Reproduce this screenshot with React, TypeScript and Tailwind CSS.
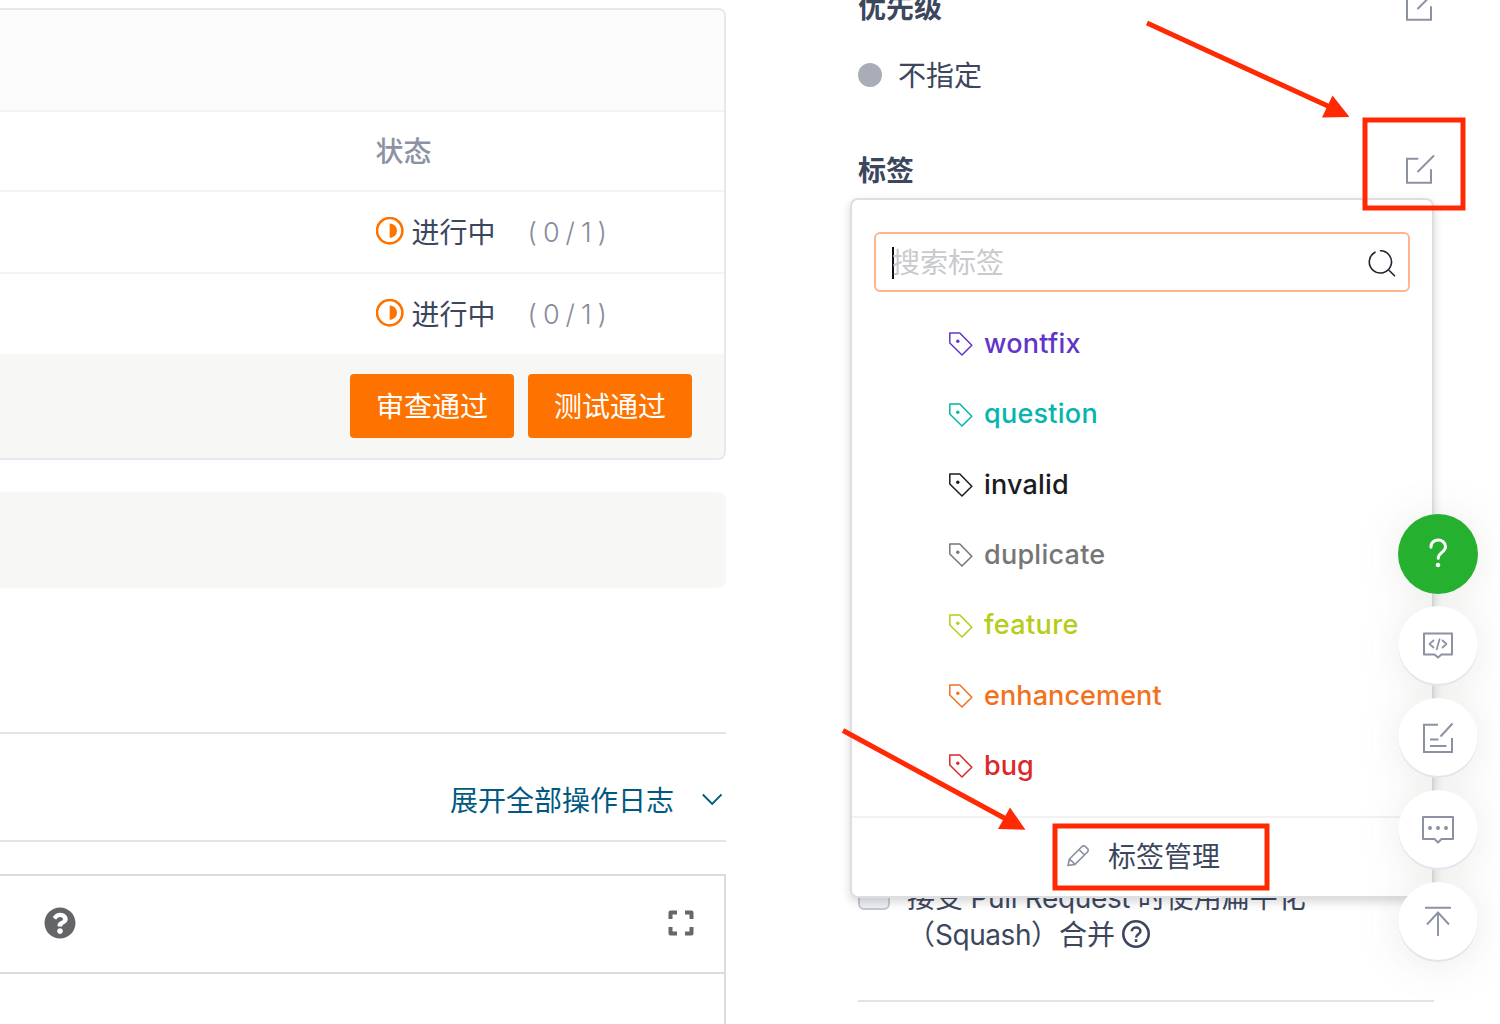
import type { ReactNode } from 'react'

const labels = [
  { name: 'wontfix', color: 'text-[#6434c9]', track: 'tracking-[0.250px]' },
  { name: 'question', color: 'text-[#06b5ad]', track: 'tracking-[0.250px]' },
  { name: 'invalid', color: 'text-[#1b1c1d]', track: 'tracking-[0.200px]' },
  { name: 'duplicate', color: 'text-[#767676]', track: 'tracking-[0.250px]' },
  { name: 'feature', color: 'text-[#b5cc18]', track: 'tracking-[0.350px]' },
  { name: 'enhancement', color: 'text-[#f2711c]', track: 'tracking-[0.100px]' },
  { name: 'bug', color: 'text-[#db2828]', track: 'tracking-[0px]' },
]

function EditIcon() {
  return (
    <svg className="-mr-0.5 h-8 w-8 text-[#8c92a4]" viewBox="0 0 32 32" fill="none" stroke="currentColor" strokeWidth="2">
      <path d="M13.500 4.700H3v24h24V16" strokeLinecap="round" />
      <path d="M14 17.500 29.500 2" strokeLinecap="round" />
    </svg>
  )
}

function ProgressIcon() {
  return (
    <svg className="-mt-0.5 h-7 w-7 shrink-0" viewBox="0 0 28 28">
      <circle cx="13.700" cy="13.700" r="12.700" fill="none" stroke="#fe7300" strokeWidth="2.600" />
      <path d="M13.700 6.400a7.300 7.300 0 0 1 0 14.600z" fill="#fe7300" />
    </svg>
  )
}

function TagIcon() {
  return (
    <svg className="h-6 w-6 shrink-0" viewBox="0 0 24 24" fill="none" stroke="currentColor" strokeWidth="1.500" strokeLinejoin="round">
      <path d="M.8.900h10L22.800 13.300 13 23 .8 11z" />
      <circle cx="8.800" cy="9.200" r="1.700" fill="currentColor" stroke="none" />
    </svg>
  )
}

function StatusRow({ last = false }: { last?: boolean }) {
  return (
    <div className={last ? 'flex h-20 items-center pl-[376px]' : 'flex h-[82px] items-center border-b-2 border-[#f0f4f7] pl-[376px]'}>
      <ProgressIcon />
      <span className="ml-[7.500px] pt-0.5 text-[28px]">进行中</span>
      <span className="ml-8 pt-0.5 text-[27px] font-light tracking-[6px] text-[#858b9e]">(0/1)</span>
    </div>
  )
}

function Activity() {
  return (
    <main className="w-[726px] shrink-0 pt-2">
      <section className="h-[452px] overflow-hidden rounded-r-lg border-2 border-l-0 border-[#e3e9ed]">
        <div className="h-[102px] border-b-2 border-[#f0f4f7] bg-[#fcfcfc]" />
        <div className="flex h-20 items-center border-b-2 border-[#f0f4f7] pt-0.5 pl-[375.500px] text-[28px] font-medium text-[#8c92a4]">状态</div>
        <StatusRow />
        <StatusRow last />
        <div className="flex h-[104px] items-center justify-end gap-3.5 bg-[#f7f7f6] pr-8 text-[28px] text-white">
          <button className="h-16 w-41 rounded bg-[#fe7300] pt-0.5">审查通过</button>
          <button className="h-16 w-41 rounded bg-[#fe7300] pt-0.5">测试通过</button>
        </div>
      </section>
      <div className="mt-8 h-24 rounded-r-lg bg-[#f7f7f6]" />
      <div className="mt-36 flex h-[110px] items-center justify-end border-y-2 border-[#e0e5ea] pt-[26px] text-[28px] text-[#005980]">
        <span className="pt-0.5">展开全部操作日志</span>
        <svg className="mr-1 ml-7 h-5 w-5" viewBox="0 0 20 20" fill="none" stroke="currentColor" strokeWidth="1.800">
          <path d="m.8 4.500 9.400 9.500 9.300-9.500" />
        </svg>
      </div>
      <section className="mt-8 h-[150px] border-t-2 border-r-2 border-[#dcdcdc]">
        <div className="flex h-[98px] items-center justify-between border-b-2 border-[#dcdcdc] pr-[30px] pb-0.5 pl-11">
          <svg className="h-8 w-8" viewBox="0 0 512 512" fill="#646569">
            <path d="M504 256c0 137-111 248-248 248S8 393 8 256C8 119.100 119 8 256 8s248 111.100 248 248zM262.700 90c-54.500 0-89.300 23-116.500 63.800-3.500 5.300-2.400 12.400 2.700 16.300l34.700 26.300c5.200 3.900 12.600 3 16.700-2.100 17.900-22.700 30.100-35.800 57.300-35.800 20.400 0 45.700 13.100 45.700 33 0 15-12.400 22.700-32.500 34C247.100 238.500 216 254.900 216 296v4c0 6.600 5.400 12 12 12h56c6.600 0 12-5.400 12-12v-1.300c0-28.500 83.200-29.600 83.200-106.700 0-58-60.200-102-116.500-102zM256 338c-25.400 0-46 20.600-46 46s20.600 46 46 46 46-20.600 46-46-20.600-46-46-46z" />
          </svg>
          <svg className="h-[26px] w-[26px]" viewBox="0 0 26 26" fill="none" stroke="#66676b" strokeWidth="4" strokeLinejoin="round">
            <path d="M9 2.500H2.500V9M17 2.500h6.500V9M9 23.500H2.500V17M17 23.500h6.500V17" />
          </svg>
        </div>
      </section>
    </main>
  )
}

function LabelMenu() {
  return (
    <div className="absolute top-[198px] left-[850px] h-[700px] w-[584px] rounded-lg border-2 border-[#dddedf] bg-white shadow-[0_4px_10px_rgba(34,36,38,0.18)]">
      <div className="mx-[22px] mt-8 flex h-15 items-center justify-between rounded-md border-2 border-[#ffb58c] pt-0.5 pr-3 pl-4">
        <div className="flex items-center text-[28px] text-[#c9cacd]">
          <span className="h-8 w-0.5 bg-[#111]" />
          <span className="-ml-0.5">搜索标签</span>
        </div>
        <svg className="h-7 w-7" viewBox="0 0 28 28" fill="none" stroke="#20232c" strokeWidth="1.600" strokeLinecap="round">
          <path d="M12.500 1.800A11.100 11.100 0 1 1 7 3.200M21.500 21.800l5 5" />
        </svg>
      </div>
      <ul className="mt-[17px] h-[507px]">
        {labels.map((l) => (
          <li key={l.name} className={`flex h-[70.350px] items-center pl-[97px] ${l.color}`}>
            <TagIcon />
            <span className={`ml-[11px] text-[27px] font-medium ${l.track}`}>{l.name}</span>
          </li>
        ))}
      </ul>
      <div className="flex h-20 items-center border-t-2 border-[#f2f2f3] pl-[214px] text-[28px]">
        <svg className="-mt-0.5 h-6 w-6 text-[#8c92a4]" viewBox="0 0 24 24" fill="none" stroke="currentColor" strokeWidth="1.700" strokeLinejoin="round">
          <path d="M2 21.500 3.500 15 16 2.500a2.300 2.300 0 0 1 3.300 0l2.200 2.200a2.300 2.300 0 0 1 0 3.300L9 20.300zM3.500 15 9 20.300M13 5.500l5.500 5.500" />
        </svg>
        <span className="ml-[18px]">标签管理</span>
      </div>
    </div>
  )
}

function Sidebar() {
  return (
    <aside className="ml-[132px] w-[576px] shrink-0 text-[28px]">
      <div className="-mt-3 flex h-10 items-center justify-between font-semibold">
        <span>优先级</span>
        <span className="-mt-0.5 flex"><EditIcon /></span>
      </div>
      <div className="mt-7 flex h-10 items-center">
        <span className="-mt-0.5 h-6 w-6 rounded-full bg-[#a9adb7]" />
        <span className="ml-4">不指定</span>
      </div>
      <div className="mt-[54px] flex h-10 items-center justify-between font-semibold">
        <span className="pt-0.5">标签</span>
        <EditIcon />
      </div>
      <div className="mt-[688px] flex">
        <span className="h-8 w-8 shrink-0 rounded-md border-2 border-[#c5c9d1] bg-[#eeeff2]" />
        <div className="ml-[17px] pt-0.5 leading-9">
          <div className="whitespace-nowrap">接受<span className="tracking-[-0.350px]"> Pull Request </span>时使用扁平化</div>
          <div className="flex items-center pt-px whitespace-nowrap">
            <span>（<span className="tracking-[-0.450px]">Squash</span>）合并</span>
            <svg className="-mt-0.5 ml-[7px] h-7 w-7" viewBox="0 0 28 28" fill="none" stroke="currentColor" strokeWidth="2.600">
              <circle cx="14" cy="14" r="12.700" />
              <path d="M9.800 11.300c0-5 8.600-5 8.600 0 0 3-4.300 3-4.300 6.300" />
              <path d="M14.100 19.200v2.800" />
            </svg>
          </div>
        </div>
      </div>
      <div className="mt-[47px] h-0.5 bg-[#dfe4e9]" />
    </aside>
  )
}

function RoundButton({ children }: { children: ReactNode }) {
  return (
    <button className="flex h-20 w-20 items-center justify-center rounded-full bg-white text-[#8c92a4] shadow-[inset_0_-2px_1px_#dfe4e9]">
      {children}
    </button>
  )
}

function FloatingTools() {
  return (
    <div className="absolute top-[514px] left-[1398px] flex flex-col gap-3 [filter:drop-shadow(0_2px_20px_rgba(60,60,50,0.11))]">
      <button className="flex h-20 w-20 items-center justify-center rounded-full bg-[#25b030]">
        <svg className="-mt-0.5 h-8 w-8" viewBox="0 0 32 32" fill="none" stroke="white" strokeWidth="3" strokeLinecap="round">
          <path d="M9 10.200C8.500 .8 23.500 .8 23.500 9.700c0 5.800-7.300 5.500-7.300 11.500" />
          <circle cx="16" cy="28" r="2.300" fill="white" stroke="none" />
        </svg>
      </button>
      <RoundButton>
        <svg className="h-8 w-8" viewBox="0 0 32 32" fill="none" stroke="currentColor" strokeWidth="2" strokeLinejoin="round">
          <path d="M2 3.500h28v21H19.500L16 27.500l-3.500-3H2z" />
          <path d="m12 10-4.500 4 4.500 4M20 10l4.500 4-4.500 4M17.800 8.500l-3.300 11.500" strokeWidth="1.700" />
        </svg>
      </RoundButton>
      <RoundButton>
        <svg className="h-8 w-8" viewBox="0 0 32 32" fill="none" stroke="currentColor" strokeWidth="2">
          <path d="M16 2.700H2V30h28V16M18.500 14.500 30.500 1.500M8 17.500h8.500M8 24h16.500" />
        </svg>
      </RoundButton>
      <RoundButton>
        <svg className="h-8 w-8" viewBox="0 0 32 32" fill="none" stroke="currentColor" strokeWidth="2" strokeLinejoin="round">
          <path d="M1 3h30v22H19.500L16 28.500 12.500 25H1z" />
          <g fill="currentColor" stroke="none">
            <circle cx="8" cy="14" r="2" /><circle cx="16" cy="14" r="2" /><circle cx="24" cy="14" r="2" />
          </g>
        </svg>
      </RoundButton>
      <RoundButton>
        <svg className="h-8 w-8" viewBox="0 0 32 32" fill="none" stroke="currentColor" strokeWidth="1.900">
          <path d="M3 1.800h26M16 30V6.500M5 18.500 16 6.500l11 12" />
        </svg>
      </RoundButton>
    </div>
  )
}

function Annotations() {
  return (
    <svg className="pointer-events-none absolute inset-0 h-[1024px] w-[1500px]" viewBox="0 0 1500 1024" fill="none" stroke="#ff2a04" strokeWidth="5">
      <rect x="1365" y="120" width="98" height="88" />
      <rect x="1055" y="826" width="212" height="62" />
      <path d="M1147 23 1330 107M843 730.500 1006 819" />
      <path d="m1349.500 117-17-21.500-10.500 22zM1025.500 829.800l-15.500-22.300-12 21.500z" fill="#ff2a04" stroke="none" />
    </svg>
  )
}

export default function App() {
  return (
    <div className="relative flex h-[1024px] w-[1500px] overflow-hidden bg-white font-['Inter','Noto_Sans_CJK_SC',sans-serif] text-[#3c475e]">
      <Activity />
      <Sidebar />
      <LabelMenu />
      <FloatingTools />
      <Annotations />
    </div>
  )
}
